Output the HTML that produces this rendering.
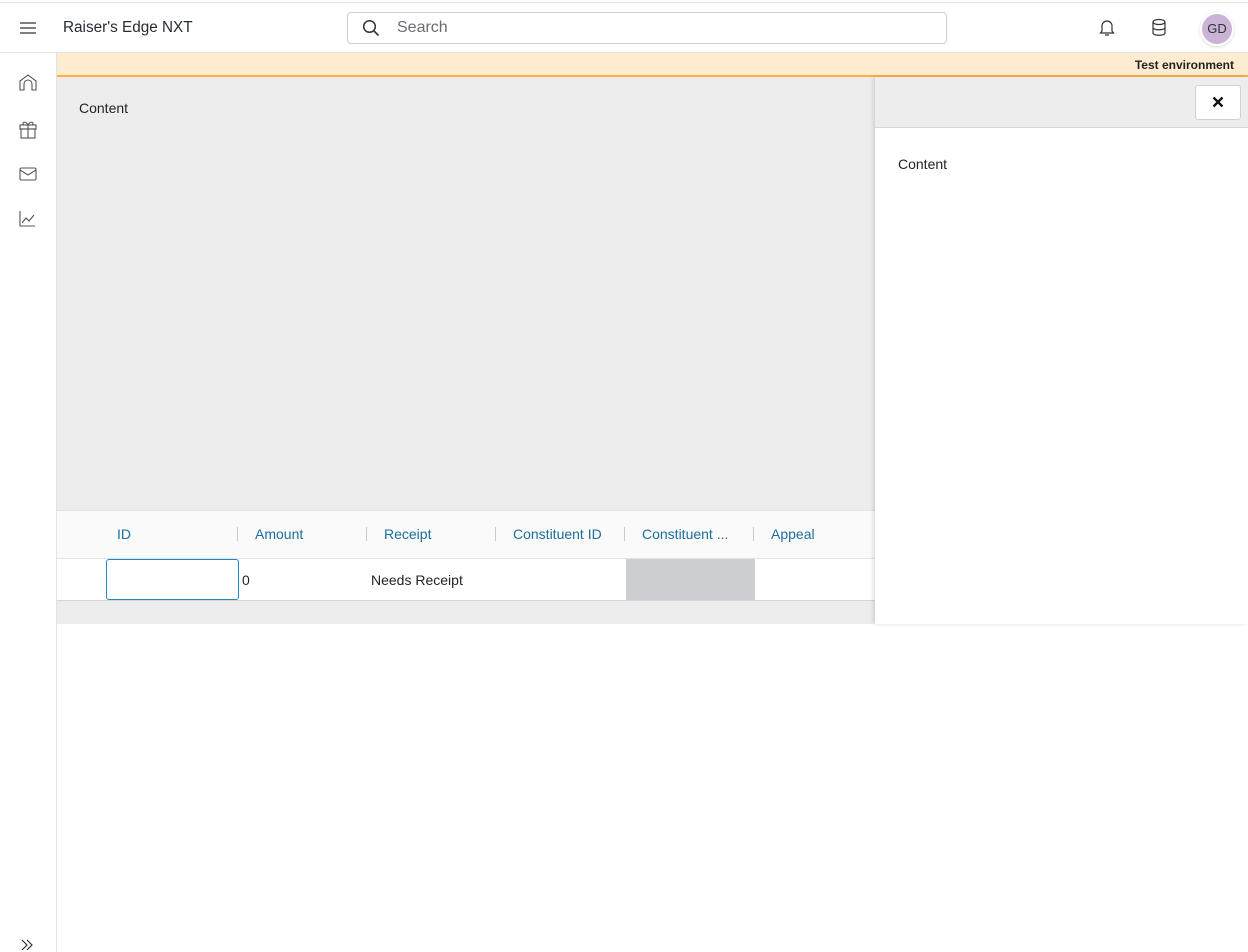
<!DOCTYPE html>
<html><head><style>
*{box-sizing:border-box;margin:0;padding:0}
body{width:1248px;height:952px;position:relative;background:#fff;font-family:"Liberation Sans",sans-serif;overflow:hidden;color:#212327}
.a{position:absolute}
</style></head><body>
<div class="a" style="left:0;top:2px;width:1248px;height:1px;background:#e2e3e4"></div>
<div class="a" style="left:0;top:52px;width:1248px;height:1px;background:#e2e3e4"></div>
<svg class="a" style="left:19px;top:21px" width="18" height="14"><path d="M1 2h16M1 7h16M1 12h16" stroke="#333" stroke-width="1.3"/></svg>
<div class="a" style="left:63px;top:19px;font-size:15.3px;color:#252b33">Raiser's Edge NXT</div>
<div class="a" style="left:347px;top:12px;width:600px;height:32px;border:1px solid #cdcfd2;border-radius:4px"></div>
<svg class="a" style="left:362px;top:19px" width="18" height="18"><circle cx="7.5" cy="7.5" r="5.8" fill="none" stroke="#333" stroke-width="1.5"/><path d="M12 12l4.5 4.5" stroke="#333" stroke-width="1.6"/></svg>
<div class="a" style="left:397px;top:19px;font-size:16px;color:#686c73">Search</div>
<svg class="a" style="left:1098px;top:18px" width="18" height="20"><path d="M4 13V8a5 5 0 0 1 10 0v5l1.5 2h-13z M7 17h4" fill="none" stroke="#333" stroke-width="1.2"/></svg>
<svg class="a" style="left:1151px;top:18px" width="16" height="20"><ellipse cx="8" cy="4" rx="6" ry="2.5" fill="none" stroke="#333" stroke-width="1.2"/><path d="M2 4v11c0 3 12 3 12 0V4M2 9.5c0 3 12 3 12 0" fill="none" stroke="#333" stroke-width="1.2"/></svg>
<div class="a" style="left:1202px;top:14px;width:30px;height:30px;border-radius:50%;background:#c9b3d6;box-shadow:0 0 0 2px #fff,0 1px 3px 2px rgba(0,0,0,.15);font-size:13px;line-height:30px;text-align:center;color:#333">GD</div>
<div class="a" style="left:56px;top:53px;width:1px;height:899px;background:#e2e3e4"></div>
<svg class="a" style="left:18px;top:73px" width="20" height="170" fill="none" stroke="#555" stroke-width="1.1">
<path d="M2 17V8l8-6 8 6v9h-4v-6a4 4 0 0 0-8 0v6z"/>
<rect x="2" y="52" width="16" height="4"/><rect x="3" y="56" width="14" height="9"/><path d="M10 52v13M10 52c-3-5-7-2-4 0M10 52c3-5 7-2 4 0"/>
<rect x="2" y="95" width="16" height="12" rx="1.5"/><path d="M2 97l8 5 8-5"/>
<path d="M2 138v15h15M4 150l4-5 3 3 5-6"/>
</svg>
<svg class="a" style="left:20px;top:938px" width="14" height="12"><path d="M2 2l5 5-5 5M7 2l5 5-5 5" fill="none" stroke="#333" stroke-width="1.2"/></svg>
<div class="a" style="left:57px;top:53px;width:1191px;height:22px;background:#fdecd0"></div>
<div class="a" style="left:57px;top:75px;width:1191px;height:2px;background:#fbb040"></div>
<div class="a" style="right:14px;top:58px;font-size:12px;font-weight:bold;color:#212327">Test environment</div>
<div class="a" style="left:57px;top:77px;width:818px;height:547px;background:#ededed"></div>
<div class="a" style="left:79px;top:100px;font-size:14px">Content</div>
<div class="a" style="left:57px;top:510px;width:818px;height:49px;background:#fafafa;border-top:1px solid #e2e3e4;border-bottom:1px solid #e2e3e4"></div>
<div class="a" style="left:57px;top:559px;width:818px;height:42px;background:#fff;border-bottom:1px solid #d5d6d8"></div>
<div class="a" style="top:526px;left:117px;font-size:14px;color:#1c6e9c;white-space:nowrap">ID</div>
<div class="a" style="top:526px;left:255px;font-size:14px;color:#1c6e9c">Amount</div>
<div class="a" style="top:526px;left:384px;font-size:14px;color:#1c6e9c">Receipt</div>
<div class="a" style="top:526px;left:513px;font-size:14px;color:#1c6e9c">Constituent ID</div>
<div class="a" style="top:526px;left:642px;font-size:14px;color:#1c6e9c">Constituent ...</div>
<div class="a" style="top:526px;left:771px;font-size:14px;color:#1c6e9c">Appeal</div>
<div class="a" style="top:527px;left:237px;width:1px;height:14px;background:#ccc"></div>
<div class="a" style="top:527px;left:366px;width:1px;height:14px;background:#ccc"></div>
<div class="a" style="top:527px;left:495px;width:1px;height:14px;background:#ccc"></div>
<div class="a" style="top:527px;left:624px;width:1px;height:14px;background:#ccc"></div>
<div class="a" style="top:527px;left:753px;width:1px;height:14px;background:#ccc"></div>
<div class="a" style="left:106px;top:559px;width:133px;height:41px;border:1px solid #1e88c7;border-radius:3px;background:#fff"></div>
<div class="a" style="left:242px;top:572px;font-size:14px">0</div>
<div class="a" style="left:371px;top:572px;font-size:14px">Needs Receipt</div>
<div class="a" style="left:626px;top:559px;width:129px;height:41px;background:#cdced1"></div>
<div class="a" style="left:875px;top:77px;width:373px;height:547px;background:#fff;box-shadow:-2px 0 4px rgba(0,0,0,.12)"></div>
<div class="a" style="left:875px;top:77px;width:373px;height:51px;background:#ededed;border-bottom:1px solid #d5d6d8"></div>
<div class="a" style="left:1195px;top:85px;width:46px;height:35px;background:#fff;border:1px solid #d0d1d3;border-radius:3px"></div>
<svg class="a" style="left:1212px;top:96px" width="12" height="12"><path d="M1.5 1.5l9 9M10.5 1.5l-9 9" stroke="#111" stroke-width="2.3"/></svg>
<div class="a" style="left:898px;top:156px;font-size:14px">Content</div>
</body></html>
